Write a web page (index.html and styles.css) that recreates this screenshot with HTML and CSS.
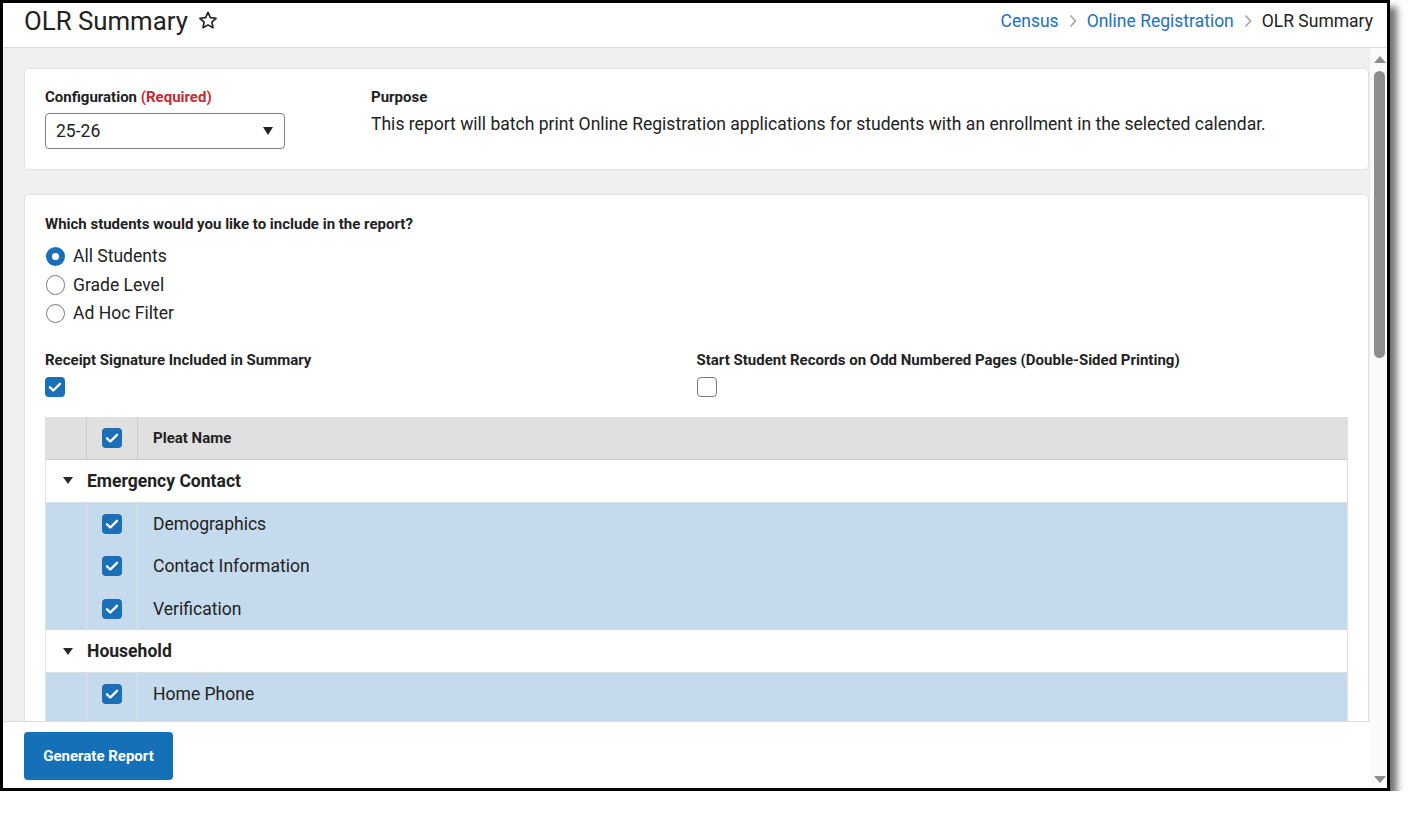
FILE: index.html
```html
<!DOCTYPE html>
<html lang="en">
<head>
<meta charset="utf-8">
<title>OLR Summary</title>
<link rel="stylesheet" href="styles.css">
</head>
<body>
<div class="frame">
  <header class="topbar">
    <div class="title-wrap">
      <h1 class="page-title">OLR Summary</h1>
      <svg class="star" viewBox="0 0 24 24" width="22" height="21" aria-hidden="true">
        <path d="M12 2.8l2.75 5.9 6.45.75-4.8 4.4 1.3 6.35L12 17l-5.7 3.2 1.3-6.35-4.8-4.4 6.45-.75z" fill="none" stroke="#222" stroke-width="1.9" stroke-linejoin="round"/>
      </svg>
    </div>
    <nav class="crumbs">
      <a class="crumb-link" href="#">Census</a>
      <svg class="chev" viewBox="0 0 8 14" width="8" height="14" aria-hidden="true"><path d="M1.5 1.5L6.5 7l-5 5.5" fill="none" stroke="#a0a0a0" stroke-width="1.5"/></svg>
      <a class="crumb-link" href="#">Online Registration</a>
      <svg class="chev" viewBox="0 0 8 14" width="8" height="14" aria-hidden="true"><path d="M1.5 1.5L6.5 7l-5 5.5" fill="none" stroke="#a0a0a0" stroke-width="1.5"/></svg>
      <span class="crumb-current">OLR Summary</span>
    </nav>
  </header>

  <div class="body">
    <div class="main">
      <div class="scroll">
        <section class="card card-config">
          <div class="field">
            <div class="label">Configuration <span class="req">(Required)</span></div>
            <div class="select">
              <span>25-26</span>
              <span class="select-arrow"></span>
            </div>
          </div>
          <div class="field">
            <div class="label">Purpose</div>
            <p class="desc">This report will batch print Online Registration applications for students with an enrollment in the selected calendar.</p>
          </div>
        </section>

        <section class="card card-options">
          <div class="label">Which students would you like to include in the report?</div>
          <div class="radios">
            <label class="radio-row"><span class="radio checked"></span>All Students</label>
            <label class="radio-row"><span class="radio"></span>Grade Level</label>
            <label class="radio-row"><span class="radio"></span>Ad Hoc Filter</label>
          </div>

          <div class="two-col">
            <div class="opt">
              <div class="label">Receipt Signature Included in Summary</div>
              <span class="cb checked"><svg viewBox="0 0 20 20" width="20" height="20"><path d="M5 10.3l3.3 3.2L15 6.8" fill="none" stroke="#fff" stroke-width="2.4" stroke-linecap="round" stroke-linejoin="round"/></svg></span>
            </div>
            <div class="opt">
              <div class="label">Start Student Records on Odd Numbered Pages (Double-Sided Printing)</div>
              <span class="cb"></span>
            </div>
          </div>

          <div class="gtable">
            <div class="g-head">
              <div class="gc"></div>
              <div class="gc gc-cb"><span class="cb checked"><svg viewBox="0 0 20 20" width="20" height="20"><path d="M5 10.3l3.3 3.2L15 6.8" fill="none" stroke="#fff" stroke-width="2.4" stroke-linecap="round" stroke-linejoin="round"/></svg></span></div>
              <div class="gc gc-name">Pleat Name</div>
            </div>

            <div class="g-group">
              <div class="gc gc-tri"><span class="tri"></span></div>
              <div class="gc gc-gname">Emergency Contact</div>
            </div>
            <div class="g-row">
              <div class="gc"></div>
              <div class="gc gc-cb"><span class="cb checked"><svg viewBox="0 0 20 20" width="20" height="20"><path d="M5 10.3l3.3 3.2L15 6.8" fill="none" stroke="#fff" stroke-width="2.4" stroke-linecap="round" stroke-linejoin="round"/></svg></span></div>
              <div class="gc gc-text">Demographics</div>
            </div>
            <div class="g-row">
              <div class="gc"></div>
              <div class="gc gc-cb"><span class="cb checked"><svg viewBox="0 0 20 20" width="20" height="20"><path d="M5 10.3l3.3 3.2L15 6.8" fill="none" stroke="#fff" stroke-width="2.4" stroke-linecap="round" stroke-linejoin="round"/></svg></span></div>
              <div class="gc gc-text">Contact Information</div>
            </div>
            <div class="g-row">
              <div class="gc"></div>
              <div class="gc gc-cb"><span class="cb checked"><svg viewBox="0 0 20 20" width="20" height="20"><path d="M5 10.3l3.3 3.2L15 6.8" fill="none" stroke="#fff" stroke-width="2.4" stroke-linecap="round" stroke-linejoin="round"/></svg></span></div>
              <div class="gc gc-text">Verification</div>
            </div>

            <div class="g-group">
              <div class="gc gc-tri"><span class="tri"></span></div>
              <div class="gc gc-gname">Household</div>
            </div>
            <div class="g-row">
              <div class="gc"></div>
              <div class="gc gc-cb"><span class="cb checked"><svg viewBox="0 0 20 20" width="20" height="20"><path d="M5 10.3l3.3 3.2L15 6.8" fill="none" stroke="#fff" stroke-width="2.4" stroke-linecap="round" stroke-linejoin="round"/></svg></span></div>
              <div class="gc gc-text">Home Phone</div>
            </div>
            <div class="g-row g-row-more">
              <div class="gc"></div>
              <div class="gc"></div>
              <div class="gc"></div>
            </div>
          </div>
        </section>
      </div>
      <footer class="footer">
        <button class="btn" type="button">Generate Report</button>
      </footer>
    </div>
    <div class="scrollbar">
      <span class="sb-arrow sb-up"></span>
      <span class="sb-thumb"></span>
      <span class="sb-spacer"></span>
      <span class="sb-arrow sb-down"></span>
    </div>
  </div>
</div>
</body>
</html>
```

FILE: styles.css
```css
* { box-sizing: border-box; }

html, body {
  margin: 0;
  padding: 0;
  background: #ffffff;
}

body {
  font-family: Roboto, "Liberation Sans", Arial, sans-serif;
  color: #222222;
  font-size: 17.55px;
}

.frame {
  width: 1390px;
  height: 791px;
  border: 3px solid #000;
  background: #fff;
  display: flex;
  flex-direction: column;
  box-shadow: 7px 7px 7px rgba(0, 0, 0, 0.55);
  overflow: hidden;
}

/* ---------- top bar ---------- */
.topbar {
  height: 45px;
  flex: none;
  display: flex;
  align-items: center;
  justify-content: space-between;
  padding: 0 14px 9px 21px;
  border-bottom: 1px solid #dcdcdc;
}

.title-wrap {
  display: flex;
  align-items: center;
  gap: 9px;
}

.page-title {
  margin: 0;
  font-size: 25.8px;
  font-weight: 400;
  color: #222;
  line-height: 30px;
}

.star { display: block; }

.crumbs {
  display: flex;
  align-items: center;
  gap: 10px;
  font-size: 17.5px;
  line-height: 22px;
}

.crumb-link {
  color: #2370bf;
  text-decoration: none;
}

.crumb-current { color: #222; }

.chev { display: block; }

/* ---------- body ---------- */
.body {
  flex: 1;
  display: flex;
  min-height: 0;
}

.main {
  flex: 1;
  display: flex;
  flex-direction: column;
  min-width: 0;
}

.scroll {
  flex: 1;
  min-height: 0;
  overflow: hidden;
  background: #efefef;
  padding: 20px 1px 0 21px;
}

.card {
  background: #fff;
  border: 1px solid #e2e2e2;
  border-radius: 5px;
}

.card-config {
  display: grid;
  grid-template-columns: 240px 1fr;
  column-gap: 86px;
  padding: 19px 20px 20px 20px;
}

.label {
  font-size: 15px;
  font-weight: 700;
  line-height: 18px;
  color: #222;
}

.req { color: #c62a2f; }

.select {
  margin-top: 7px;
  height: 36px;
  border: 1px solid #7f7f7f;
  border-radius: 4px;
  display: flex;
  align-items: center;
  justify-content: space-between;
  padding: 0 11px 0 10px;
  font-size: 17.55px;
}

.select-arrow {
  width: 0;
  height: 0;
  border-left: 5px solid transparent;
  border-right: 5px solid transparent;
  border-top: 8px solid #222;
}

.desc {
  margin: 7px 0 0 0;
  line-height: 22px;
  font-size: 17.55px;
  color: #222;
}

.card-options {
  margin-top: 24px;
  padding: 20px 20px 20px 20px;
}

.radios {
  margin-top: 9px;
  display: flex;
  flex-direction: column;
}

.radio-row {
  height: 28.5px;
  display: flex;
  align-items: center;
  gap: 8px;
  font-size: 17.55px;
  color: #222;
}

.radio {
  width: 19.5px;
  height: 19.5px;
  border-radius: 50%;
  border: 1px solid #7a7a7a;
  background: #fff;
  flex: none;
  margin-left: 0.5px;
}

.radio.checked {
  border: 6px solid #1a6fb6;
}

.two-col {
  margin-top: 23px;
  display: grid;
  grid-template-columns: 1fr 1fr;
}

.opt .label { margin-bottom: 8px; }

.cb {
  display: block;
  width: 20px;
  height: 20px;
  border-radius: 4px;
  border: 1px solid #7a7a7a;
  background: #fff;
}

.cb.checked {
  border: none;
  background: #1a6fb6;
}

.cb svg { display: block; }

/* ---------- table ---------- */
.gtable {
  margin-top: 20px;
  border: 1px solid #e0e0e0;
  border-top: none;
}

.g-head,
.g-row {
  display: grid;
  grid-template-columns: 41px 51px 1fr;
}

.g-head {
  height: 43px;
  background: #e0e0e0;
  border-bottom: 1px solid #c9c9c9;
}

.g-head .gc:nth-child(1),
.g-head .gc:nth-child(2) {
  border-right: 1px solid #cccccc;
}

.gc {
  display: flex;
  align-items: center;
}

.gc-cb { justify-content: center; padding-left: 0; }

.gc-name {
  padding-left: 15px;
  font-size: 15px;
  font-weight: 700;
}

.g-group {
  display: grid;
  grid-template-columns: 41px 1fr;
  height: 43px;
  background: #fff;
  border-bottom: 1px solid #dedede;
}

.gc-tri { justify-content: center; padding-left: 2px; }

.tri {
  width: 0;
  height: 0;
  border-left: 5.5px solid transparent;
  border-right: 5.5px solid transparent;
  border-top: 7px solid #2a2a2a;
}

.gc-gname {
  font-size: 17.55px;
  font-weight: 700;
  color: #222;
}

.g-row {
  height: 42.5px;
  background: #c5dbed;
}

.g-row .gc:nth-child(1),
.g-row .gc:nth-child(2) {
  border-right: 1px solid #dde3e8;
}

.gc-text {
  padding-left: 15px;
  font-size: 17.55px;
  color: #222;
}

/* ---------- footer ---------- */
.footer {
  flex: none;
  height: 67px;
  background: #fff;
  border-top: 1px solid #dcdcdc;
  padding: 10px 0 0 21px;
}

.btn {
  width: 149px;
  height: 48px;
  border: none;
  border-radius: 4px;
  background: #1670b8;
  color: #fff;
  font-family: Roboto, "Liberation Sans", Arial, sans-serif;
  font-size: 15px;
  font-weight: 700;
  padding: 0;
  cursor: pointer;
}

/* ---------- scrollbar ---------- */
.scrollbar {
  width: 17px;
  flex: none;
  background: #fafafa;
  display: flex;
  flex-direction: column;
  align-items: center;
  padding: 8px 0 5px 2px;
}

.sb-arrow {
  width: 0;
  height: 0;
  border-left: 6.5px solid transparent;
  border-right: 6.5px solid transparent;
}

.sb-up { border-bottom: 7px solid #8c8c8c; }
.sb-down { border-top: 7px solid #8c8c8c; }

.sb-thumb {
  margin-top: 8px;
  width: 11px;
  height: 287px;
  border-radius: 6px;
  background: #8d8d8d;
}

.sb-spacer { flex: 1; }
```
